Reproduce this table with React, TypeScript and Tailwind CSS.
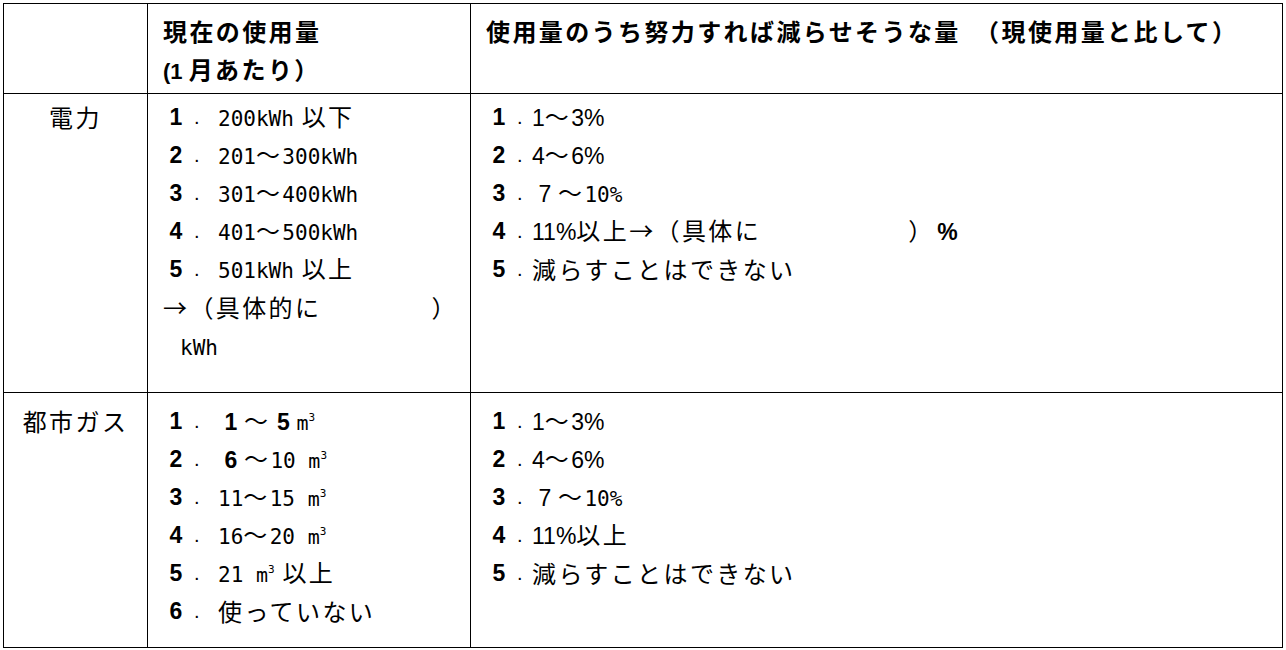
import React from "react";

// half-width (condensed-looking) run
function H({ children }: { children: React.ReactNode }) {
  return (
    <span className="font-['DejaVu_Sans_Mono','Noto_Sans_CJK_JP',monospace] text-[21px] tracking-normal">
      {children}
    </span>
  );
}

// Arial-like run (full-width digits, %)
function A({ children }: { children: React.ReactNode }) {
  return <span className="font-['Liberation_Sans',sans-serif] text-[23px] tracking-normal">{children}</span>;
}

// full-width cell holding a single Arial glyph
function Cell({ children, bold }: { children: React.ReactNode; bold?: boolean }) {
  return (
    <span
      className={
        bold
          ? "inline-block w-[26px] text-center font-['Liberation_Sans',sans-serif] text-[23px] font-bold tracking-normal"
          : "inline-block w-[26px] text-center font-['Liberation_Sans',sans-serif] text-[23px] tracking-normal"
      }
    >
      {children}
    </span>
  );
}

function M3() {
  return (
    <span className="font-['DejaVu_Sans_Mono',monospace] tracking-normal">
      <span className="text-[20px]">m</span>
      <span className="align-super text-[11px] leading-none">3</span>
    </span>
  );
}

function Item({ n, wide, children }: { n: string; wide?: boolean; children?: React.ReactNode }) {
  return (
    <div className="flex h-[38px] items-center whitespace-nowrap leading-[38px]">
      <Cell bold>{n}</Cell>
      <span
        className={
          wide
            ? "inline-block w-[29px] pl-[5px] font-['Liberation_Sans',sans-serif] text-[20px] tracking-normal"
            : "inline-block w-[20px] pl-[5px] font-['Liberation_Sans',sans-serif] text-[20px] tracking-normal"
        }
      >
        .
      </span>
      <span>{children}</span>
    </div>
  );
}

export default function App() {
  return (
    <div className="min-h-screen bg-white pl-[3px] pt-[3px] text-black">
      <table className="w-[1280px] table-fixed border-collapse font-['Noto_Sans_CJK_JP',sans-serif] text-[24px] tracking-[2.4px]">
        <colgroup>
          <col className="w-[144px]" />
          <col className="w-[323px]" />
          <col />
        </colgroup>
        <tbody>
          <tr>
            <td className="border border-black p-0" />
            <td className="border border-black pb-[2px] pl-[15px] pt-[8px] align-top font-bold leading-[38px] whitespace-nowrap">
              <div>現在の使用量</div>
              <div>
                <span className="font-['Liberation_Sans',sans-serif] text-[22px] tracking-normal">(1 </span>
                月あたり）
              </div>
            </td>
            <td className="border border-black pl-[15px] pt-[8px] align-top font-bold leading-[38px] whitespace-nowrap">
              使用量のうち努力すれば減らせそうな量　（現使用量と比して）
            </td>
          </tr>

          <tr>
            <td className="border border-black pt-[4px] text-center align-top leading-[38px]">電力</td>
            <td className="border border-black pb-[28px] pl-[15px] pt-[4px] align-top">
              <Item n="1" wide>
                <H>200kWh</H> 以下
              </Item>
              <Item n="2" wide>
                <H>201</H>～<H>300kWh</H>
              </Item>
              <Item n="3" wide>
                <H>301</H>～<H>400kWh</H>
              </Item>
              <Item n="4" wide>
                <H>401</H>～<H>500kWh</H>
              </Item>
              <Item n="5" wide>
                <H>501kWh</H> 以上
              </Item>
              <div className="h-[38px] whitespace-nowrap leading-[38px]">
                →（具体的に<span className="inline-block w-[110px]" />）
              </div>
              <div className="h-[38px] pl-[17px] leading-[38px]">
                <H>kWh</H>
              </div>
            </td>
            <td className="border border-black pl-[15px] pt-[4px] align-top">
              <Item n="1">
                <A>1</A>～<A>3%</A>
              </Item>
              <Item n="2">
                <A>4</A>～<A>6%</A>
              </Item>
              <Item n="3">
                <Cell>7</Cell>～<H>10%</H>
              </Item>
              <Item n="4">
                <A>11%</A>以上→（具体に<span className="inline-block w-[147px]" />）<Cell bold>%</Cell>
              </Item>
              <Item n="5">減らすことはできない</Item>
            </td>
          </tr>

          <tr>
            <td className="border border-black pt-[9px] text-center align-top leading-[38px] whitespace-nowrap">
              都市ガス
            </td>
            <td className="border border-black pb-[17px] pl-[15px] pt-[9px] align-top">
              <Item n="1" wide>
                <Cell bold>1</Cell>～<Cell bold>5</Cell>
                <M3 />
              </Item>
              <Item n="2" wide>
                <Cell bold>6</Cell>～<H>10 </H>
                <M3 />
              </Item>
              <Item n="3" wide>
                <H>11</H>～<H>15 </H>
                <M3 />
              </Item>
              <Item n="4" wide>
                <H>16</H>～<H>20 </H>
                <M3 />
              </Item>
              <Item n="5" wide>
                <H>21 </H>
                <M3 /> 以上
              </Item>
              <Item n="6" wide>使っていない</Item>
            </td>
            <td className="border border-black pl-[15px] pt-[9px] align-top">
              <Item n="1">
                <A>1</A>～<A>3%</A>
              </Item>
              <Item n="2">
                <A>4</A>～<A>6%</A>
              </Item>
              <Item n="3">
                <Cell>7</Cell>～<H>10%</H>
              </Item>
              <Item n="4">
                <A>11%</A>以上
              </Item>
              <Item n="5">減らすことはできない</Item>
            </td>
          </tr>
        </tbody>
      </table>
    </div>
  );
}
